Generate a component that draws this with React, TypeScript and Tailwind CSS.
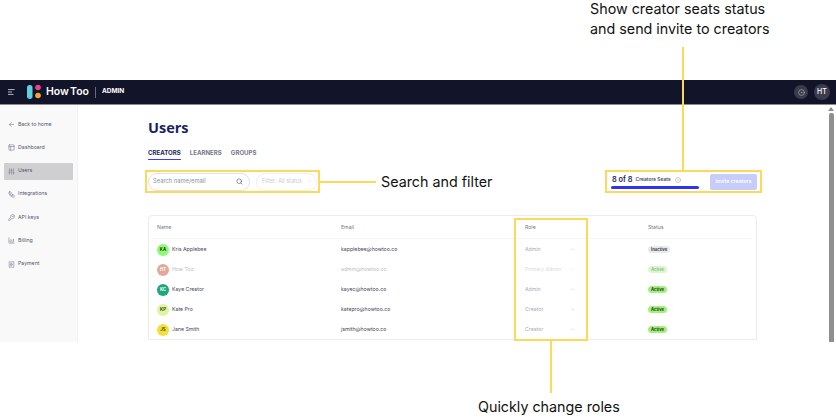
import { ArrowLeft, ChevronDown, CircleDot, Info, PanelsTopLeft, Search, SlidersVertical, Workflow, KeyRound, ChartArea, ReceiptText } from "lucide-react"

const sideItems = [
  { label: "Back to home", icon: ArrowLeft },
  { label: "Dashboard", icon: PanelsTopLeft },
  { label: "Users", icon: SlidersVertical, active: true },
  { label: "Integrations", icon: Workflow },
  { label: "API keys", icon: KeyRound },
  { label: "Billing", icon: ChartArea },
  { label: "Payment", icon: ReceiptText },
]

const rows = [
  { initials: "KA", name: "Kris Applebee", email: "kapplebee@howtoo.co", role: "Admin", status: "Inactive", avatar: "bg-[#8ffb74] text-[#1d3a16]" },
  { initials: "HT", name: "How Too", email: "admin@howtoo.co", role: "Primary Admin", status: "Active", avatar: "bg-[#e2a99b] text-white", dim: true },
  { initials: "KC", name: "Kaye Creator", email: "kayec@howtoo.co", role: "Admin", status: "Active", avatar: "bg-[#1da77c] text-white" },
  { initials: "KP", name: "Kate Pro", email: "katepro@howtoo.co", role: "Creator", status: "Active", avatar: "bg-[#dcf7a0] text-[#3a4216]" },
  { initials: "JS", name: "Jane Smith", email: "jsmith@howtoo.co", role: "Creator", status: "Active", avatar: "bg-[#f4e03a] text-[#4a4310]" },
]

function Sidebar() {
  return (
    <aside className="w-[78px] shrink-0 bg-[#f9f9f9] border-r border-[#f1f1f1] pt-[11px] px-[4px] flex flex-col gap-[6.3px]">
      {sideItems.map((item) => {
        const Icon = item.icon
        return (
          <div
            key={item.label}
            className={`h-[17px] flex items-center gap-[3px] pl-[4px] rounded-[1px] text-[5.2px] text-[#55566a] ${item.active ? "bg-[#cfcfd2]" : ""}`}
          >
            <Icon size={7} strokeWidth={1.5} className="shrink-0" />
            <span>{item.label}</span>
          </div>
        )
      })}
    </aside>
  )
}

function Tabs() {
  return (
    <div className="flex gap-[9px] text-[6.1px] leading-[8px] font-bold mt-[12px]">
      <div className="text-[#1b1f5e] border-b-[1.5px] border-[#3a3fee] pb-[2px]">CREATORS</div>
      <div className="text-[#77788a]">LEARNERS</div>
      <div className="text-[#77788a]">GROUPS</div>
    </div>
  )
}

function Toolbar() {
  return (
    <div className="flex items-center mt-[12.5px] h-[18px]">
      <div className="w-[102px] h-[18px] rounded-full border border-[#dfe0ea] flex items-center justify-between pl-[4px] pr-[5px] text-[5.8px] text-[#8f90a2]">
        <span>Search name/email</span>
        <Search size={7} strokeWidth={2} className="text-[#4c4d63] mr-[1px]" />
      </div>
      <div className="ml-[6px] w-[61px] h-[18px] rounded-full border border-[#efeff4] flex items-center justify-between pl-[5px] pr-[4px] text-[5.5px] text-[#c9cad4] whitespace-nowrap">
        <span>Filter: All status</span>
        <ChevronDown size={5} />
      </div>
      <div className="ml-auto flex items-center">
        <div className="w-[88px]">
          <div className="flex items-center gap-[3px] h-[10px] pl-[1px]">
            <span className="text-[7.4px] font-semibold text-[#1b1f5e]">8 of 8</span>
            <span className="text-[4.9px] font-semibold text-[#44455a]">Creators Seats</span>
            <Info size={6} strokeWidth={1.4} className="text-[#77788a] ml-[1px]" />
          </div>
          <div className="h-[3px] bg-[#2f35ee] rounded-full mt-[1px]" />
        </div>
        <div className="ml-[11px] w-[47px] h-[16px] rounded-[2px] bg-[#c7ccfb] text-white text-[5.2px] font-semibold flex items-center justify-center">
          Invite creators
        </div>
      </div>
    </div>
  )
}

function Table() {
  return (
    <div className="mt-[24px] border border-[#ececee] rounded-t-[4px] px-[3px]">
      <div className="grid grid-cols-[184px_184px_123px_1fr] items-center h-[23px] pt-[3px] border-b border-[#f6f6f7] pl-[5px] text-[5.2px] text-[#77788a]">
        <span>Name</span>
        <span>Email</span>
        <span>Role</span>
        <span>Status</span>
      </div>
      {rows.map((r) => (
        <div key={r.email} className="grid grid-cols-[184px_184px_123px_1fr] items-center h-[20px] pt-[2px] pl-[5px] text-[5.2px]">
          <div className={`flex items-center gap-[3px] ${r.dim ? "text-[#bbbbc4]" : "text-[#44455a]"}`}>
            <span className={`w-[12px] h-[12px] pt-[1px] rounded-full flex items-center justify-center text-[4.4px] leading-none font-bold ${r.avatar}`}>
              {r.initials}
            </span>
            <span>{r.name}</span>
          </div>
          <span className={r.dim ? "text-[#bbbbc4]" : "text-[#44455a]"}>{r.email}</span>
          <div className={`w-[50px] flex items-center justify-between whitespace-nowrap ${r.dim ? "text-[#d9d9df]" : "text-[#a9aab6]"}`}>
            <span>{r.role}</span>
            <ChevronDown size={5} />
          </div>
          <div className="flex">
            {r.status === "Inactive" ? (
              <span className="flex items-center h-[7px] pt-[1px] px-[3px] rounded-full bg-[#e9e9ec] text-[#44455a] text-[4.2px] leading-none font-bold">Inactive</span>
            ) : (
              <span className={`flex items-center h-[7px] pt-[1px] px-[3px] rounded-full text-[4.2px] leading-none font-bold ${r.dim ? "bg-[#dcf6cf] text-[#9ac08a]" : "bg-[#a5ee80] text-[#1e4a10]"}`}>Active</span>
            )}
          </div>
        </div>
      ))}
    </div>
  )
}

export default function App() {
  return (
    <div className="relative w-[836px] h-[419px] bg-white overflow-hidden font-['Inter',sans-serif]">
      <div className="h-[80px] flex flex-col pl-[590px] text-[14.3px] leading-[20px] text-[#111]">
        <div className="-mt-[1px]">Show creator seats status</div>
        <div>and send invite to creators</div>
      </div>

      <div className="h-[262px] flex flex-col overflow-hidden">
        <header className="h-[25px] shrink-0 bg-[#12142a] border-b border-[#8a8a92] flex items-center pl-[8px] pr-[6px] text-white">
          <svg width="7" height="6" viewBox="0 0 7 6" className="shrink-0" fill="none" stroke="#c9c9d0" strokeWidth="0.9">
            <path d="M0 0.6H6.5M0 3H4M0 5.4H5.5" />
          </svg>
          <svg width="18" height="16" viewBox="0 0 18 16" className="ml-[11px]">
            <rect x="1" y="1" width="5.5" height="14" rx="2.75" fill="#5fd0dc" />
            <circle cx="12" cy="3.5" r="2.8" fill="#ec3f8c" />
            <circle cx="12" cy="11.5" r="2.8" fill="#f6a623" />
          </svg>
          <span className="ml-[2px] text-[10.5px] font-semibold [word-spacing:-1.5px]">How Too</span>
          <span className="ml-[6px] w-px h-[11px] bg-[#6a6b78]" />
          <span className="ml-[6px] text-[6.5px] font-bold">ADMIN</span>
          <div className="ml-auto flex items-center gap-[6px]">
            <span className="w-[14px] h-[14px] rounded-full bg-[#3b3c4b] flex items-center justify-center">
              <CircleDot size={7} className="text-[#b9b9c2]" />
            </span>
            <span className="w-[16px] h-[16px] rounded-full bg-[#3b3c4b] flex items-center justify-center text-[7px] font-medium">HT</span>
          </div>
        </header>

        <div className="flex-1 flex min-h-0">
          <Sidebar />
          <main className="w-[680px] pl-[70px] pr-[1px] pt-[14px]">
            <h1 className="text-[14.5px] leading-[18px] font-bold text-[#1b1f5e] font-['Open_Sans',sans-serif]">Users</h1>
            <Tabs />
            <Toolbar />
            <Table />
          </main>
          <div className="ml-auto mr-[2px] w-[6px] flex flex-col items-center pt-[2px]">
            <span className="w-0 h-0 border-x-[3px] border-x-transparent border-b-[4px] border-b-[#8f8f8f]" />
            <span className="mt-[2px] w-[5px] flex-1 bg-[#8f8f8f] rounded-t-[2px]" />
          </div>
        </div>
      </div>

      <div className="h-[77px] pl-[478px] pt-[55px] text-[14.3px] leading-[19px] text-[#111]">Quickly change roles</div>

      {/* callouts drawn on top of the app */}
      <div className="absolute left-[145px] top-[170px] w-[175px] h-[23px] border-2 border-[#fcd95a]" />
      <div className="absolute left-[320px] top-[181px] w-[56px] h-[2px] bg-[#fcd95a]" />
      <div className="absolute left-[381px] top-[172px] text-[14.3px] leading-[20px] text-[#111]">Search and filter</div>
      <div className="absolute left-[605px] top-[170px] w-[157px] h-[23px] border-2 border-[#fcd95a]" />
      <div className="absolute left-[682px] top-[47px] w-[2px] h-[123px] bg-[#fcd95a]" />
      <div className="absolute left-[514px] top-[218px] w-[74px] h-[123px] border-2 border-[#fcd95a]" />
      <div className="absolute left-[550px] top-[341px] w-[2px] h-[52px] bg-[#fcd95a]" />
    </div>
  )
}
